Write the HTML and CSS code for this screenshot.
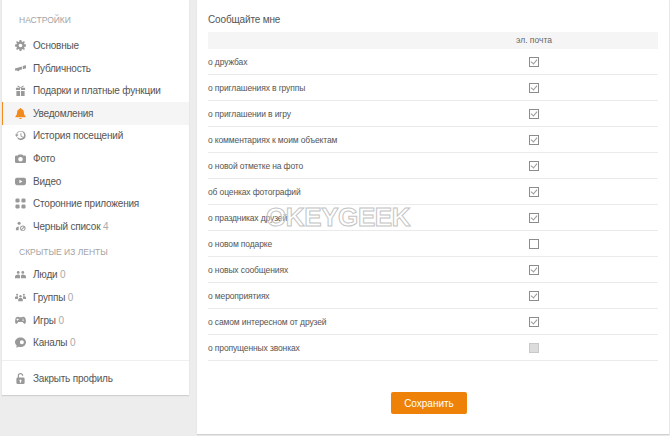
FILE: index.html
```html
<!DOCTYPE html>
<html lang="ru">
<head>
    <meta charset="UTF-8">
    <title>Настройки уведомлений</title>
    <link rel="stylesheet" href="styles.css">
</head>
<body>
    <div class="page">
        <div class="sidebar">
            <div class="side-title first">НАСТРОЙКИ</div>
            <a class="side-item">
                <svg viewBox="0 0 12 12"><path d="M5 0h2l.3 1.600 1.100.5 1.400-.9 1 1-.9 1.400.5 1.100L12 5v2l-1.600.3-.5 1.100.9 1.400-1 1-1.400-.9-1.100.5L7 12H5l-.3-1.600-1.100-.5-1.400.9-1-1 .9-1.400-.5-1.100L0 7V5l1.600-.3.5-1.100-.9-1.400 1-1 1.400.9 1.100-.5zM6 4a2 2 0 1 0 0 4 2 2 0 0 0 0-4z" fill-rule="evenodd"/></svg>
                Основные
            </a>
            <a class="side-item">
                <svg viewBox="0 0 12 12"><path d="M0 6l7.500-2.200v3.200L4.800 7.700c0 1-.6 1.300-1.300 1.200-.6 0-1-.4-1.100-.8L0 8.200zM8.500 3.400L12 2.500v3.300l-3.500 1z"/></svg>
                Публичность
            </a>
            <a class="side-item">
                <svg viewBox="0 0 12 12"><path d="M1 3h4.500v2.500H1zM6.500 3H11v2.500H6.500zM1.500 6.500h4V12h-4zM6.500 6.500h4V12h-4zM3 .5l3 2 3-2 .6 1L6.500 3h-1L2.400 1.500z"/></svg>
                Подарки и платные функции
            </a>
            <a class="side-item active">
                <svg viewBox="0 0 12 12"><path d="M6 0a1 1 0 0 1 1 1c1.800.5 2.700 2 2.700 3.700 0 2 .6 3.300 1.800 4.300v1H.5V9c1.200-1 1.800-2.300 1.800-4.300C2.300 3 3.200 1.500 5 1a1 1 0 0 1 1-1zM4.500 10.800h3a1.500 1.200 0 0 1-3 0z"/></svg>
                Уведомления
            </a>
            <a class="side-item">
                <svg viewBox="0 0 12 12"><path d="M6.500 1a5 5 0 1 1-4.300 7.500l1-.6a3.800 3.800 0 1 0-.9-2.900H4L1.700 7.500 0 5h1.300A5 5 0 0 1 6.500 1zM6 3.500h1v2.800l2 1.200-.5.8L6 6.800z"/></svg>
                История посещений
            </a>
            <a class="side-item">
                <svg viewBox="0 0 12 12"><path d="M4 1.500h4l.8 1.200H10.500A1.500 1.500 0 0 1 12 4.200v5.300A1.500 1.500 0 0 1 10.500 11h-9A1.500 1.500 0 0 1 0 9.500V4.200a1.500 1.500 0 0 1 1.500-1.500h1.700zM6 4.300a2.500 2.500 0 1 0 0 5 2.500 2.500 0 0 0 0-5z" fill-rule="evenodd"/></svg>
                Фото
            </a>
            <a class="side-item">
                <svg viewBox="0 0 12 12"><path d="M2 2h8a2 2 0 0 1 2 2v4a2 2 0 0 1-2 2H2a2 2 0 0 1-2-2V4a2 2 0 0 1 2-2zM4.800 4v4l3.400-2z" fill-rule="evenodd"/></svg>
                Видео
            </a>
            <a class="side-item">
                <svg viewBox="0 0 12 12"><rect x="0.500" y="0.500" width="4.500" height="4.500" rx="1.500"/><rect x="7" y="0.500" width="4.500" height="4.500" rx="1.500"/><rect x="0.500" y="7" width="4.500" height="4.500" rx="1.500"/><rect x="7" y="7" width="4.500" height="4.500" rx="1.500"/></svg>
                Сторонние приложения
            </a>
            <a class="side-item">
                <svg viewBox="0 0 12 12"><circle cx="4.500" cy="2.500" r="1.700"/><path d="M1 10V8.500C1 7 2.500 6 4 6v4z"/><path d="M8.500 5a3 3 0 1 0 0 6 3 3 0 0 0 0-6zm0 1a2 2 0 0 1 1.100.3L6.800 9.100A2 2 0 0 1 8.500 6zm0 4a2 2 0 0 1-1-.3l2.700-2.700A2 2 0 0 1 8.500 10z" fill-rule="evenodd"/></svg>
                <span>Черный список <span class="count">4</span></span>
            </a>
            <div class="side-title">СКРЫТЫЕ ИЗ ЛЕНТЫ</div>
            <a class="side-item">
                <svg viewBox="0 0 12 12"><circle cx="3.500" cy="3.800" r="1.500"/><circle cx="8.500" cy="3.800" r="1.500"/><path d="M0 10V8.500C0 7 1.500 6 3.500 6S5.500 7 5.500 8.500V10zM6.500 10V8.500C6.500 7 6.500 6 8.500 6S12 7 12 8.500V10z"/></svg>
                <span>Люди <span class="count">0</span></span>
            </a>
            <a class="side-item">
                <svg viewBox="0 0 12 12"><circle cx="6" cy="4.500" r="1.300"/><circle cx="2.300" cy="3" r="1.100"/><circle cx="9.700" cy="3" r="1.100"/><path d="M3.500 10V8.500C3.500 7 5 6.200 6 6.200S8.500 7 8.500 8.500V10zM0 7.500V6.300C0 5.200 1.200 4.700 2.300 4.700c.5 0 .9.200 1.200.4L3 7.500zM12 7.500V6.300c0-1.100-1.200-1.600-2.300-1.600-.5 0-.9.200-1.200.4L9 7.500z"/></svg>
                <span>Группы <span class="count">0</span></span>
            </a>
            <a class="side-item">
                <svg viewBox="0 0 12 12"><path d="M3 2c1 0 1.500.5 2 .5h2C7.500 2.500 8 2 9 2c1.500 0 2.300 1 2.600 2.500.4 2 .6 4.500-.8 5-.9.300-1.600-.8-2.300-2H3.500c-.7 1.200-1.400 2.300-2.300 2C-.2 9 0 6.500.4 4.500.7 3 1.500 2 3 2zM2.500 3.800v.9h-.9v.8h.9v.9h.8v-.9h.9v-.8h-.9v-.9zM8.800 3.800a.6.6 0 1 0 0 1.200.6.6 0 0 0 0-1.200zM8.800 5.300a.6.6 0 1 0 0 1.200.6.6 0 0 0 0-1.200z" fill-rule="evenodd"/></svg>
                <span>Игры <span class="count">0</span></span>
            </a>
            <a class="side-item">
                <svg viewBox="0 0 12 12"><path d="M6 .5c3.300 0 6 2.300 6 5.200s-2.700 5.200-6 5.200c-.7 0-1.300-.1-1.900-.3L1.500 11.800l.3-2.700C.7 8.200 0 7 0 5.700 0 2.800 2.700.5 6 .5zM7.500 3.500a2.200 2.200 0 1 0 0 4.400 2.200 2.200 0 0 0 0-4.400z" fill-rule="evenodd"/></svg>
                <span>Каналы <span class="count">0</span></span>
            </a>
            <div class="side-footer">
                <a class="side-item">
                    <svg viewBox="0 0 12 12"><path d="M6 0c1.800 0 3 1.200 3 3H7.700C7.700 2 7 1.300 6 1.300S4.300 2 4.300 3v2H9a1.500 1.500 0 0 1 1.500 1.500v4A1.500 1.500 0 0 1 9 12H3a1.500 1.500 0 0 1-1.500-1.500v-4A1.500 1.500 0 0 1 3 5V3c0-1.800 1.200-3 3-3zM6 7a1.200 1.200 0 0 0-.6 2.200V10.500h1.200V9.200A1.200 1.200 0 0 0 6 7z" fill-rule="evenodd"/></svg>
                    Закрыть профиль
                </a>
            </div>
        </div>

        <div class="content">
            <div class="content-title">Сообщайте мне</div>
            <div class="table">
                <div class="table-head">эл. почта</div>
                <div class="row"><span>о дружбах</span><span class="check on"></span></div>
                <div class="row"><span>о приглашениях в группы</span><span class="check on"></span></div>
                <div class="row"><span>о приглашении в игру</span><span class="check on"></span></div>
                <div class="row"><span>о комментариях к моим объектам</span><span class="check on"></span></div>
                <div class="row"><span>о новой отметке на фото</span><span class="check on"></span></div>
                <div class="row"><span>об оценках фотографий</span><span class="check on"></span></div>
                <div class="row"><span>о праздниках друзей</span><span class="check on"></span></div>
                <div class="row"><span>о новом подарке</span><span class="check"></span></div>
                <div class="row"><span>о новых сообщениях</span><span class="check on"></span></div>
                <div class="row"><span>о мероприятиях</span><span class="check on"></span></div>
                <div class="row"><span>о самом интересном от друзей</span><span class="check on"></span></div>
                <div class="row"><span>о пропущенных звонках</span><span class="check off"></span></div>
            </div>
            <div class="actions">
                <button class="save" type="button">Сохранить</button>
            </div>
            <div class="watermark">OKEYGEEK</div>
        </div>
    </div>
</body>
</html>
```

FILE: styles.css
```css
body {
    margin: 0;
    background: #ededed;
    font-family: "Liberation Sans", Arial, sans-serif;
    color: #333;
}

.page {
    display: flex;
    align-items: flex-start;
    gap: 8px;
    width: 670px;
    height: 436px;
    padding-left: 2px;
    box-sizing: border-box;
    overflow: hidden;
}

.sidebar {
    width: 187px;
    height: 395px;
    flex: none;
    background: #fff;
    box-shadow: 0 1px 1px rgba(0, 0, 0, 0.12);
}

.side-title {
    height: 26px;
    padding-left: 17px;
    line-height: 29px;
    font-size: 8.500px;
    color: #a3a3a3;
}

.side-title.first {
    height: 34.300px;
    line-height: 40px;
}

.side-item {
    display: flex;
    align-items: center;
    height: 22.600px;
    padding-left: 12px;
    font-size: 10px;
    letter-spacing: -0.200px;
    color: #555;
}

.side-item svg {
    width: 11px;
    height: 11px;
    margin-right: 7px;
    margin-left: 1px;
    flex: none;
    fill: #999;
}

.side-item.active {
    background: #f5f5f5;
    box-shadow: inset 1px 0 0 #f18a1c;
}

.side-item.active svg {
    fill: #f18a1c;
}

.count {
    color: #aaa;
}

.side-footer {
    margin-top: 6px;
    padding-top: 6px;
    border-top: 1px solid #efefef;
}

.content {
    position: relative;
    width: 472px;
    height: 434px;
    flex: none;
    box-sizing: border-box;
    padding: 13px 11px 0;
    background: #fff;
    box-shadow: 0 1px 1px rgba(0, 0, 0, 0.12);
}

.content-title {
    height: 19px;
    font-size: 10px;
    line-height: 13px;
    letter-spacing: -0.150px;
    color: #555;
}

.table-head {
    height: 17px;
    padding-left: 202px;
    line-height: 17px;
    text-align: center;
    background: #f5f5f5;
    font-size: 8.500px;
    color: #666;
}

.row {
    display: flex;
    align-items: center;
    justify-content: space-between;
    height: 26px;
    box-sizing: border-box;
    border-bottom: 1px solid #eaeaea;
    font-size: 8.500px;
    letter-spacing: -0.130px;
    color: #555;
}

.check {
    position: relative;
    width: 8px;
    height: 8px;
    margin-right: 119px;
    border: 1px solid #8c8c8c;
    background: #fff;
}

.check.on::after {
    content: "";
    position: absolute;
    left: 2px;
    top: 0.500px;
    width: 3px;
    height: 5px;
    border-right: 1px solid #999;
    border-bottom: 1px solid #999;
    transform: rotate(40deg);
}

.check.off {
    background: #dcdcdc;
    border-color: #c8c8c8;
}

.actions {
    display: flex;
    justify-content: center;
    margin-top: 31px;
    padding-right: 8px;
}

.save {
    width: 76px;
    height: 22px;
    padding: 0;
    border: none;
    border-radius: 2px;
    background: #ee8208;
    color: #fff;
    font-family: inherit;
    font-size: 10px;
}

.watermark {
    position: absolute;
    left: 69px;
    top: 202px;
    font-size: 26px;
    font-weight: bold;
    line-height: 30px;
    letter-spacing: -0.400px;
    color: rgba(255, 255, 255, 0.3);
    -webkit-text-stroke: 1px #c4c4c4;
}
```
